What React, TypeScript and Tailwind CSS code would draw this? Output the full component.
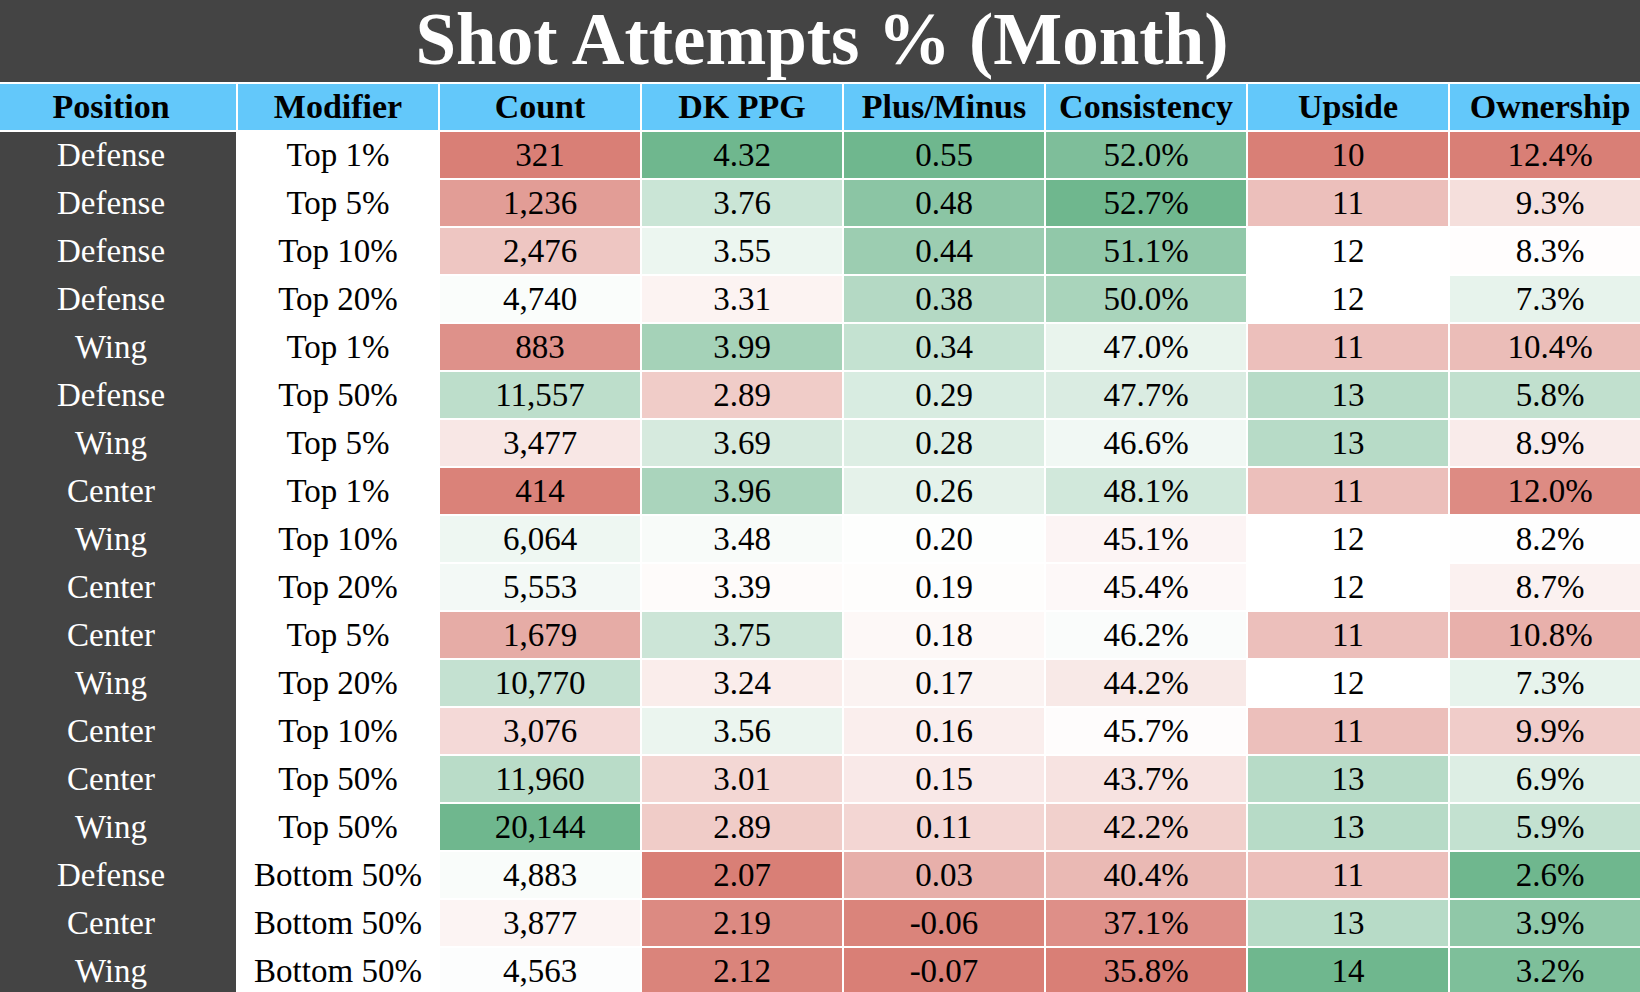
import React from "react";

type Row = [string, string, string, string, string, string, string, string];

const rows: Row[] = [
  ["Defense", "Top 1%", "321", "4.32", "0.55", "52.0%", "10", "12.4%"],
  ["Defense", "Top 5%", "1,236", "3.76", "0.48", "52.7%", "11", "9.3%"],
  ["Defense", "Top 10%", "2,476", "3.55", "0.44", "51.1%", "12", "8.3%"],
  ["Defense", "Top 20%", "4,740", "3.31", "0.38", "50.0%", "12", "7.3%"],
  ["Wing", "Top 1%", "883", "3.99", "0.34", "47.0%", "11", "10.4%"],
  ["Defense", "Top 50%", "11,557", "2.89", "0.29", "47.7%", "13", "5.8%"],
  ["Wing", "Top 5%", "3,477", "3.69", "0.28", "46.6%", "13", "8.9%"],
  ["Center", "Top 1%", "414", "3.96", "0.26", "48.1%", "11", "12.0%"],
  ["Wing", "Top 10%", "6,064", "3.48", "0.20", "45.1%", "12", "8.2%"],
  ["Center", "Top 20%", "5,553", "3.39", "0.19", "45.4%", "12", "8.7%"],
  ["Center", "Top 5%", "1,679", "3.75", "0.18", "46.2%", "11", "10.8%"],
  ["Wing", "Top 20%", "10,770", "3.24", "0.17", "44.2%", "12", "7.3%"],
  ["Center", "Top 10%", "3,076", "3.56", "0.16", "45.7%", "11", "9.9%"],
  ["Center", "Top 50%", "11,960", "3.01", "0.15", "43.7%", "13", "6.9%"],
  ["Wing", "Top 50%", "20,144", "2.89", "0.11", "42.2%", "13", "5.9%"],
  ["Defense", "Bottom 50%", "4,883", "2.07", "0.03", "40.4%", "11", "2.6%"],
  ["Center", "Bottom 50%", "3,877", "2.19", "-0.06", "37.1%", "13", "3.9%"],
  ["Wing", "Bottom 50%", "4,563", "2.12", "-0.07", "35.8%", "14", "3.2%"],
];

const headers = ["Position", "Modifier", "Count", "DK PPG", "Plus/Minus", "Consistency", "Upside", "Ownership"];

const RED = [217, 127, 118];
const GREEN = [111, 183, 142];
const WHITE = [255, 255, 255];

const num = (s: string) => parseFloat(s.replace(/[,%]/g, ""));

// min / median / max scale like the sheet's conditional formatting
function scaleFor(col: number, reversed: boolean) {
  const vals = rows.map((r) => num(r[col]));
  const sorted = [...vals].sort((a, b) => a - b);
  const n = sorted.length;
  const mid = n % 2 ? sorted[(n - 1) / 2] : (sorted[n / 2 - 1] + sorted[n / 2]) / 2;
  const min = sorted[0];
  const max = sorted[n - 1];
  const low = reversed ? GREEN : RED;
  const high = reversed ? RED : GREEN;
  return (v: number) => {
    let from = WHITE, to = WHITE, t = 0;
    if (v <= mid) {
      from = low; to = WHITE; t = max === min ? 1 : (v - min) / (mid - min);
    } else {
      from = WHITE; to = high; t = (v - mid) / (max - mid);
    }
    const c = from.map((f, i) => Math.round(f + (to[i] - f) * t));
    return `rgb(${c[0]}, ${c[1]}, ${c[2]})`;
  };
}

const scales: Record<number, (v: number) => string> = {
  2: scaleFor(2, false),
  3: scaleFor(3, false),
  4: scaleFor(4, false),
  5: scaleFor(5, false),
  6: scaleFor(6, false),
  7: scaleFor(7, true),
};

export default function App() {
  return (
    <div className="w-[1640px] h-[992px] overflow-hidden bg-white font-['Liberation_Serif',serif]">
      <div className="h-[84px] bg-[#444444] border-b-2 border-white flex items-center justify-center">
        <h1 className="text-white font-bold text-[73px] leading-none pb-[4px] pl-[4px]">Shot Attempts % (Month)</h1>
      </div>
      <div className="grid grid-cols-[236px_repeat(7,200px)] gap-x-[2px]">
        {headers.map((h, i) => (
          <div key={h} className={`h-[48px] bg-[#63c8fa] border-b-2 border-white flex items-center justify-center text-[34px] font-bold text-black leading-none ${i === 0 ? "pr-[14px]" : ""}`}>
            {h}
          </div>
        ))}
        {rows.map((r, ri) =>
          r.map((cell, ci) => {
            if (ci === 0) {
              return (
                <div key={`${ri}-${ci}`} className="h-[48px] bg-[#444444] border-b-2 border-[#444444] flex items-center justify-center pr-[14px] text-[33px] text-white leading-none">
                  {cell}
                </div>
              );
            }
            const bg = scales[ci] ? scales[ci](num(cell)) : undefined;
            return (
              <div key={`${ri}-${ci}`} className="h-[48px] border-b-2 border-white flex items-center justify-center text-[33px] text-black leading-none" style={bg ? { backgroundColor: bg } : undefined}>
                {cell}
              </div>
            );
          })
        )}
      </div>
    </div>
  );
}
